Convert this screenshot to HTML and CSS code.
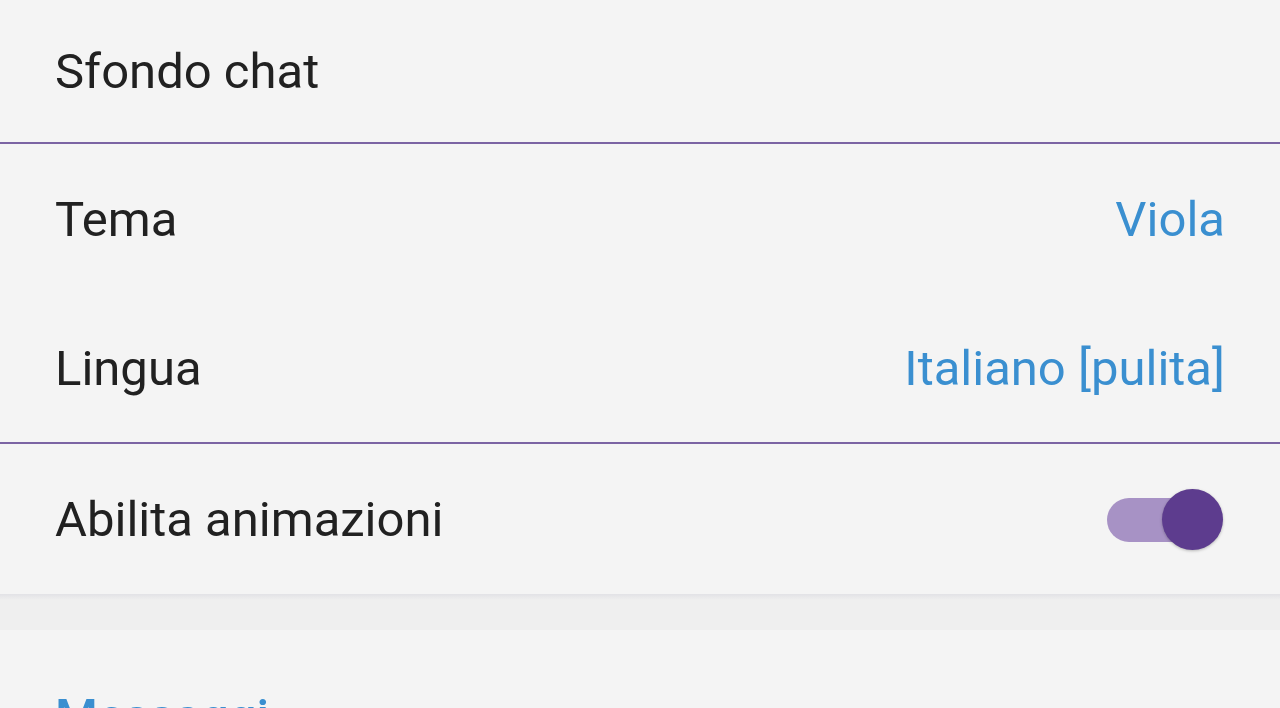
FILE: index.html
```html
<!DOCTYPE html>
<html lang="it">
  <head>
    <meta charset="UTF-8" />
    <meta name="viewport" content="width=device-width, initial-scale=1.0" />
    <title>Impostazioni</title>
    <link rel="stylesheet" href="styles.css">
  </head>
  <body>
    <div class="section">
      <div class="row first">
        <span class="label">Sfondo chat</span>
      </div>
      <div class="divider"></div>
      <div class="row">
        <span class="label">Tema</span>
        <span class="value">Viola</span>
      </div>
      <div class="row short">
        <span class="label">Lingua</span>
        <span class="value">Italiano [pulita]</span>
      </div>
      <div class="divider"></div>
      <div class="row">
        <span class="label">Abilita animazioni</span>
        <div class="switch on">
          <div class="track"></div>
          <div class="knob"></div>
        </div>
      </div>
    </div>
    <div class="gap"></div>
    <div class="section">
      <div class="header">Messaggi</div>
    </div>
  </body>
</html>
```

FILE: styles.css
```css
* {
  box-sizing: border-box;
}
body {
  margin: 0;
  background-color: #efefef;
  font-family: Roboto, "Noto Sans", sans-serif;
  overflow: hidden;
}
.section {
  background-color: #f4f4f4;
}
.row {
  height: 150px;
  display: flex;
  align-items: center;
  justify-content: space-between;
  padding: 0 55px 0 55px;
  font-size: 49px;
}
.row.first {
  height: 142px;
}
.row.short {
  height: 148px;
}
.label {
  color: #212121;
}
.value {
  color: #3a8fd0;
}
.divider {
  height: 2px;
  background-color: #7b64a3;
}
.gap {
  height: 36px;
  background: linear-gradient(#e2e2e6, #efefef 6px);
}
.header {
  padding: 58px 55px 0;
  height: 120px;
  font-size: 49px;
  font-weight: 500;
  color: #3a8fd0;
}
/* toggle */
.switch {
  position: relative;
  width: 116px;
  height: 61px;
  margin-right: 2px;
}
.track {
  position: absolute;
  left: 0;
  top: 9px;
  width: 100px;
  height: 44px;
  border-radius: 22px;
  background-color: #a792c5;
}
.knob {
  position: absolute;
  right: 0;
  top: 0;
  width: 61px;
  height: 61px;
  border-radius: 50%;
  background-color: #5d3c8e;
  box-shadow: 0 1px 3px rgba(0, 0, 0, 0.25);
}
```
